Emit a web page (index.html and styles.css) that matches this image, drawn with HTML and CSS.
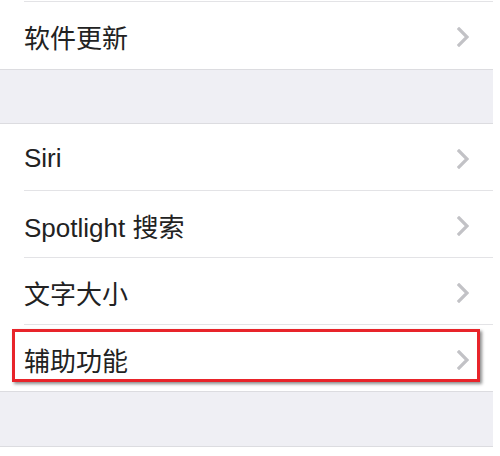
FILE: index.html
```html
<!DOCTYPE html>
<html lang="zh-CN">
<head>
<meta charset="utf-8">
<link rel="stylesheet" href="styles.css">
</head>
<body>
<div class="screen">
  <div class="group first">
    <div class="row"><span class="label">软件更新</span><svg class="chev" viewBox="0 0 12 20"><path d="M2 2 L10 10 L2 18"/></svg></div>
  </div>
  <div class="gap"></div>
  <div class="group">
    <div class="row"><span class="label">Siri</span><svg class="chev" viewBox="0 0 12 20"><path d="M2 2 L10 10 L2 18"/></svg></div>
    <div class="row"><span class="label">Spotlight 搜索</span><svg class="chev" viewBox="0 0 12 20"><path d="M2 2 L10 10 L2 18"/></svg></div>
    <div class="row"><span class="label">文字大小</span><svg class="chev" viewBox="0 0 12 20"><path d="M2 2 L10 10 L2 18"/></svg></div>
    <div class="row highlighted"><span class="label">辅助功能</span><svg class="chev" viewBox="0 0 12 20"><path d="M2 2 L10 10 L2 18"/></svg><div class="mark"></div></div>
  </div>
  <div class="gap bottom"></div>
</div>
</body>
</html>
```
FILE: styles.css
```css
html, body {
  margin: 0;
  padding: 0;
  background: #ffffff;
}
.screen {
  width: 493px;
  font-family: "Liberation Sans", "Noto Sans CJK SC", sans-serif;
}
.group {
  background: #ffffff;
  border-top: 1px solid #dcdce0;
  border-bottom: 1px solid #dcdce0;
}
.group.first {
  border-top: none;
  padding-top: 1px;
}
.row {
  position: relative;
  height: 66px;
  margin-left: 24px;
  padding-right: 24px;
  display: flex;
  align-items: center;
  justify-content: space-between;
  border-top: 1px solid #e3e3e6;
}
.group .row:first-child {
  border-top: none;
}
.group.first .row {
  border-top: 1px solid #e3e3e6;
  height: 67px;
}
.label {
  font-size: 26px;
  color: #222222;
  padding-top: 2px;
}
.chev {
  width: 12px;
  height: 20px;
  margin-top: 3px;
}
.chev path {
  fill: none;
  stroke: #c2c2c6;
  stroke-width: 3.2;
  stroke-linecap: square;
}
.gap {
  height: 53px;
  background: #efeff4;
}
.gap.bottom {
  height: 54px;
  border-bottom: 1px solid #dcdce0;
}
.mark {
  position: absolute;
  left: -12px;
  top: 4px;
  width: 462px;
  height: 47px;
  border: 3px solid #e8242a;
  box-shadow: 2px 2px 3px rgba(0, 0, 0, 0.45);
  pointer-events: none;
}
```
